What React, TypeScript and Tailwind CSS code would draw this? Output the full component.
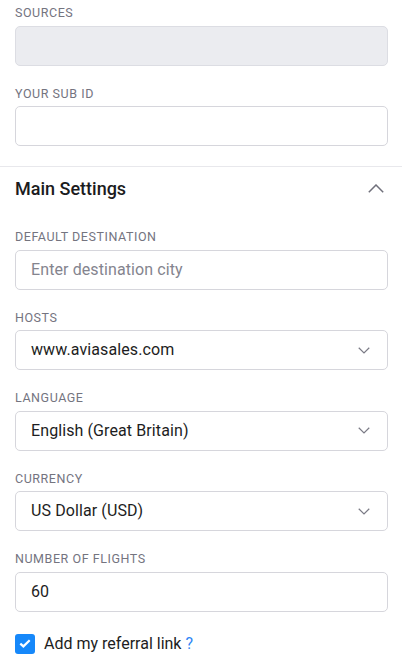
import type { ReactNode } from "react"

const font = { fontFamily: "Roboto, 'Noto Sans', Arial, sans-serif" }

function Label({ children }: { children: ReactNode }) {
  return (
    <div className="mb-[4.5px] text-[12.5px] leading-4 uppercase tracking-[0.55px] text-[#74747f]">
      {children}
    </div>
  )
}

function ChevronDown() {
  return (
    <svg width="12" height="7" viewBox="0 0 12 7" fill="none" className="shrink-0">
      <path d="M0.75 0.75 L6 6 L11.25 0.75" stroke="#7b7b86" strokeWidth="1.2" />
    </svg>
  )
}

function Field({ label, children, mt = true }: { label: string; children: ReactNode; mt?: boolean }) {
  return (
    <div className={mt ? "mt-5" : ""}>
      <Label>{label}</Label>
      {children}
    </div>
  )
}

function Select({ value }: { value: string }) {
  return (
    <div className="flex h-10 items-center justify-between rounded-[5px] border border-[#d6d6dc] bg-white pl-[15px] pr-[17px]">
      <span className="text-[16px] tracking-[0.1px] text-[#1d1d22]">{value}</span>
      <ChevronDown />
    </div>
  )
}

function TextBox({ value, placeholder }: { value?: string; placeholder?: string }) {
  return (
    <div className="flex h-10 items-center rounded-[5px] border border-[#d6d6dc] bg-white pl-[15px]">
      {value ? (
        <span className="text-[16px] tracking-[0.1px] text-[#1d1d22]">{value}</span>
      ) : (
        <span className="text-[16px] tracking-[0.1px] text-[#84848e]">{placeholder}</span>
      )}
    </div>
  )
}

export default function App() {
  return (
    <div className="min-h-screen w-[402px] bg-white" style={font}>
      <div className="pl-[15px] pr-[14px] pt-[5px]">
        <Field label="Sources" mt={false}>
          <div className="h-10 rounded-[5px] border border-[#dcdde3] bg-[#ebecf0]" />
        </Field>
        <Field label="Your Sub ID">
          <TextBox />
        </Field>
      </div>

      <div className="mt-5 border-t border-[#e8e8ec]">
        <div className="flex h-[42px] items-center justify-between pl-[15px] pr-[18px]">
          <span className="text-[18px] font-medium text-[#1b1b20]">Main Settings</span>
          <svg width="16" height="9" viewBox="0 0 16 9" fill="none">
            <path d="M0.8 8.2 L8 1 L15.2 8.2" stroke="#70707b" strokeWidth="1.5" />
          </svg>
        </div>
      </div>

      <div className="pl-[15px] pr-[14px]">
        <Field label="Default Destination">
          <TextBox placeholder="Enter destination city" />
        </Field>
        <Field label="Hosts">
          <Select value="www.aviasales.com" />
        </Field>
        <Field label="Language">
          <Select value="English (Great Britain)" />
        </Field>
        <Field label="Currency">
          <Select value="US Dollar (USD)" />
        </Field>
        <Field label="Number of flights">
          <TextBox value="60" />
        </Field>

        <div className="mt-[20px] flex items-center">
          <div className="flex h-5 w-5 items-center justify-center rounded-[3px] bg-[#1688fa]">
            <svg width="12" height="9" viewBox="0 0 12 9" fill="none">
              <path d="M1.3 4.6 L4.4 7.4 L10.7 1.3" stroke="white" strokeWidth="2.2" />
            </svg>
          </div>
          <span className="ml-[9px] text-[16px] text-[#1d1d22]">
            Add my referral link <span className="text-[#2f86f6]">?</span>
          </span>
        </div>
      </div>
    </div>
  )
}
